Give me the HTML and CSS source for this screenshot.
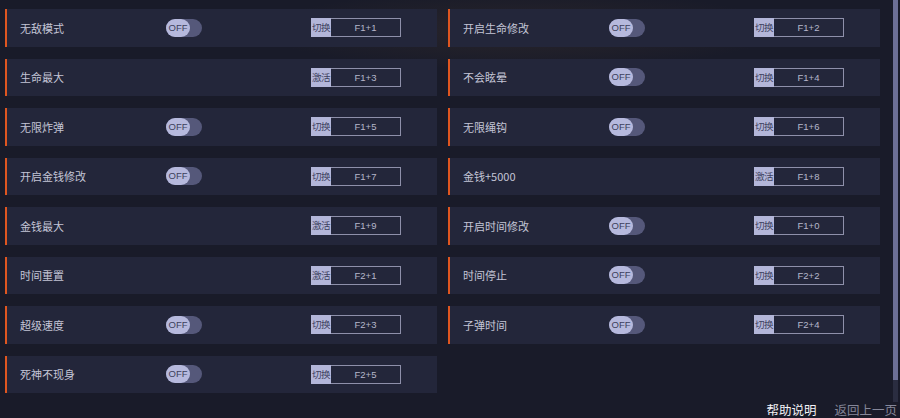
FILE: index.html
```html
<!DOCTYPE html>
<html lang="zh-CN">
<head>
<meta charset="utf-8">
<link rel="stylesheet" href="styles.css">
</head>
<body>
<div class="main">
  <div class="grid">
    <div class="row"><span class="label">无敌模式</span><span class="toggle"><span class="knob">OFF</span></span><span class="key"><span class="kind">切换</span><span class="combo">F1+1</span></span></div>
    <div class="row"><span class="label">开启生命修改</span><span class="toggle"><span class="knob">OFF</span></span><span class="key"><span class="kind">切换</span><span class="combo">F1+2</span></span></div>
    <div class="row"><span class="label">生命最大</span><span class="spacer"></span><span class="key"><span class="kind">激活</span><span class="combo">F1+3</span></span></div>
    <div class="row"><span class="label">不会眩晕</span><span class="toggle"><span class="knob">OFF</span></span><span class="key"><span class="kind">切换</span><span class="combo">F1+4</span></span></div>
    <div class="row"><span class="label">无限炸弹</span><span class="toggle"><span class="knob">OFF</span></span><span class="key"><span class="kind">切换</span><span class="combo">F1+5</span></span></div>
    <div class="row"><span class="label">无限绳钩</span><span class="toggle"><span class="knob">OFF</span></span><span class="key"><span class="kind">切换</span><span class="combo">F1+6</span></span></div>
    <div class="row"><span class="label">开启金钱修改</span><span class="toggle"><span class="knob">OFF</span></span><span class="key"><span class="kind">切换</span><span class="combo">F1+7</span></span></div>
    <div class="row"><span class="label">金钱+5000</span><span class="spacer"></span><span class="key"><span class="kind">激活</span><span class="combo">F1+8</span></span></div>
    <div class="row"><span class="label">金钱最大</span><span class="spacer"></span><span class="key"><span class="kind">激活</span><span class="combo">F1+9</span></span></div>
    <div class="row"><span class="label">开启时间修改</span><span class="toggle"><span class="knob">OFF</span></span><span class="key"><span class="kind">切换</span><span class="combo">F1+0</span></span></div>
    <div class="row"><span class="label">时间重置</span><span class="spacer"></span><span class="key"><span class="kind">激活</span><span class="combo">F2+1</span></span></div>
    <div class="row"><span class="label">时间停止</span><span class="toggle"><span class="knob">OFF</span></span><span class="key"><span class="kind">切换</span><span class="combo">F2+2</span></span></div>
    <div class="row"><span class="label">超级速度</span><span class="toggle"><span class="knob">OFF</span></span><span class="key"><span class="kind">切换</span><span class="combo">F2+3</span></span></div>
    <div class="row"><span class="label">子弹时间</span><span class="toggle"><span class="knob">OFF</span></span><span class="key"><span class="kind">切换</span><span class="combo">F2+4</span></span></div>
    <div class="row"><span class="label">死神不现身</span><span class="toggle"><span class="knob">OFF</span></span><span class="key"><span class="kind">切换</span><span class="combo">F2+5</span></span></div>
  </div>
  <div class="scrollbar"><div class="thumb"></div></div>
</div>
<div class="footer">
  <span class="help">帮助说明</span>
  <span class="back">返回上一页</span>
</div>
</body>
</html>
```
FILE: styles.css
```css
html, body {
  margin: 0;
  padding: 0;
}
body {
  width: 900px;
  height: 418px;
  overflow: hidden;
  background: #191b29;
  background-image: radial-gradient(ellipse 260px 40px at 520px 30px, rgba(70, 55, 45, 0.35), rgba(0,0,0,0));
  font-family: "Noto Sans CJK SC", "Noto Sans", sans-serif;
  color: #c3c5d6;
}
.main {
  display: flex;
  height: 402px;
}
.grid {
  display: grid;
  grid-template-columns: 432px 432px;
  grid-auto-rows: 37.5px;
  column-gap: 11px;
  row-gap: 12px;
  padding: 9px 0 0 5px;
  align-content: start;
}
.row {
  display: flex;
  align-items: center;
  background: #23263a;
  border-left: 2px solid #df5620;
  padding-left: 13px;
}
.label {
  width: 146px;
  font-size: 11px;
  color: #c3c5d6;
  white-space: nowrap;
}
.toggle {
  display: flex;
  width: 36px;
  height: 18px;
  border-radius: 9px;
  background: #55587a;
}
.knob {
  width: 24px;
  height: 18px;
  border-radius: 9px;
  background: #b6b9dd;
  color: #3c3f5c;
  font-family: "Liberation Sans", sans-serif;
  font-size: 9.5px;
  line-height: 18px;
  text-align: center;
}
.spacer {
  width: 36px;
}
.key {
  display: flex;
  margin-left: 109px;
  width: 90px;
  height: 19px;
  box-sizing: border-box;
  border: 1px solid #8e90aa;
  border-left: none;
}
.kind {
  width: 20px;
  height: 19px;
  margin-top: -1px;
  background: #b3b6d9;
  color: #3e4160;
  font-size: 9.5px;
  line-height: 19px;
  text-align: center;
  letter-spacing: -0.5px;
}
.combo {
  flex: 1;
  text-align: center;
  font-family: "Liberation Sans", sans-serif;
  font-size: 9.5px;
  line-height: 17px;
  color: #b5b7cb;
}
.scrollbar {
  margin-left: 13px;
  width: 5px;
  height: 402px;
  background: #2a2d40;
}
.thumb {
  height: 380px;
  background: #6c6f95;
}
.footer {
  display: flex;
  justify-content: flex-end;
  gap: 18px;
  padding-right: 3px;
  height: 16px;
  font-size: 12.5px;
  line-height: 16px;
}
.help {
  color: #f2f2f6;
}
.back {
  color: #858799;
}
```
